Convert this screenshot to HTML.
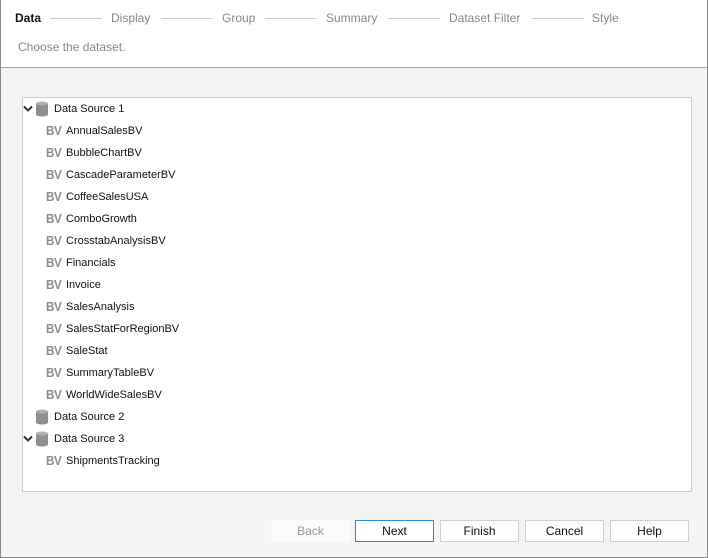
<!DOCTYPE html><html><head><style>
body{margin:0;width:708px;height:558px;overflow:hidden;font-family:"Liberation Sans",sans-serif;font-size:11px;background:#f4f4f3;position:relative}
.bd{position:absolute;left:0;top:0;width:706px;height:557px;border:1px solid #8a8a8a;border-top:none;z-index:5;pointer-events:none}
.hdr{position:absolute;left:0;top:0;width:708px;height:67px;background:#fff;border-bottom:1px solid #a0a0a0}
.s{position:absolute;top:11px;font-size:12px;color:#888}
.ln{position:absolute;top:18px;height:1px;background:#ccc}
.tree{position:absolute;left:22px;top:97px;width:668px;height:393px;background:#fff;border:1px solid #ccc}
.r{position:absolute;height:22px;line-height:22px;color:#111;font-size:11px;white-space:nowrap}
.bv{position:absolute;font-weight:bold;color:#8c8c8c;font-size:13px;letter-spacing:-0.5px;transform:scaleX(0.9);transform-origin:left}
.b{position:absolute;top:520px;width:77px;height:20px;border:1px solid #d0d0d0;background:#fdfdfd;text-align:center;line-height:20px;font-size:12px;color:#111}
</style></head><body><div class="bd"></div>
<div class="hdr">
<div class="s" style="left:15px;color:#111;font-weight:bold">Data</div>
<div class="ln" style="left:50px;width:52px"></div>
<div class="s" style="left:111px">Display</div>
<div class="ln" style="left:161px;width:52px"></div>
<div class="s" style="left:222px">Group</div>
<div class="ln" style="left:265px;width:52px"></div>
<div class="s" style="left:326px">Summary</div>
<div class="ln" style="left:388px;width:52px"></div>
<div class="s" style="left:449px">Dataset Filter</div>
<div class="ln" style="left:532px;width:52px"></div>
<div class="s" style="left:592px">Style</div>
<div class="s" style="left:18px;top:40px;font-size:12px">Choose the dataset.</div>
</div>
<div class="tree"></div>
<div id="t"></div>
<div class="b" style="left:271px;border-color:#f8f8f8;background:#fafafa;color:#999">Back</div>
<div class="b" style="left:355px;border-color:#2a8ad4;background:#fff">Next</div>
<div class="b" style="left:440px">Finish</div>
<div class="b" style="left:525px">Cancel</div>
<div class="b" style="left:610px">Help</div>
<script>
var rows=[[0,'Data Source 1',1],[1,'AnnualSalesBV'],[1,'BubbleChartBV'],[1,'CascadeParameterBV'],[1,'CoffeeSalesUSA'],[1,'ComboGrowth'],[1,'CrosstabAnalysisBV'],[1,'Financials'],[1,'Invoice'],[1,'SalesAnalysis'],[1,'SalesStatForRegionBV'],[1,'SaleStat'],[1,'SummaryTableBV'],[1,'WorldWideSalesBV'],[0,'Data Source 2',0],[0,'Data Source 3',1],[1,'ShipmentsTracking']];
var h='';rows.forEach(function(r,i){var y=98+i*22;
if(r[0]==0){
if(r[2])h+='<svg style="position:absolute;left:23px;top:'+(y+7)+'px" width="10" height="8"><path d="M1 1.5L5 5.5L9 1.5" stroke="#333" stroke-width="2" fill="none"/></svg>';
h+='<svg style="position:absolute;left:35px;top:'+(y+3)+'px" width="14" height="16"><rect x="1" y="2.5" width="12" height="11" fill="#8f8f8f"/><ellipse cx="7" cy="13.5" rx="6" ry="2" fill="#8f8f8f"/><ellipse cx="7" cy="2.5" rx="6" ry="2" fill="#b0b0b0"/></svg>';
h+='<div class="r" style="left:54px;top:'+y+'px">'+r[1]+'</div>';}
else{h+='<div class="r bv" style="left:46px;top:'+y+'px">BV</div><div class="r" style="left:66px;top:'+y+'px">'+r[1]+'</div>';}});
document.getElementById('t').innerHTML=h;
</script></body></html>
